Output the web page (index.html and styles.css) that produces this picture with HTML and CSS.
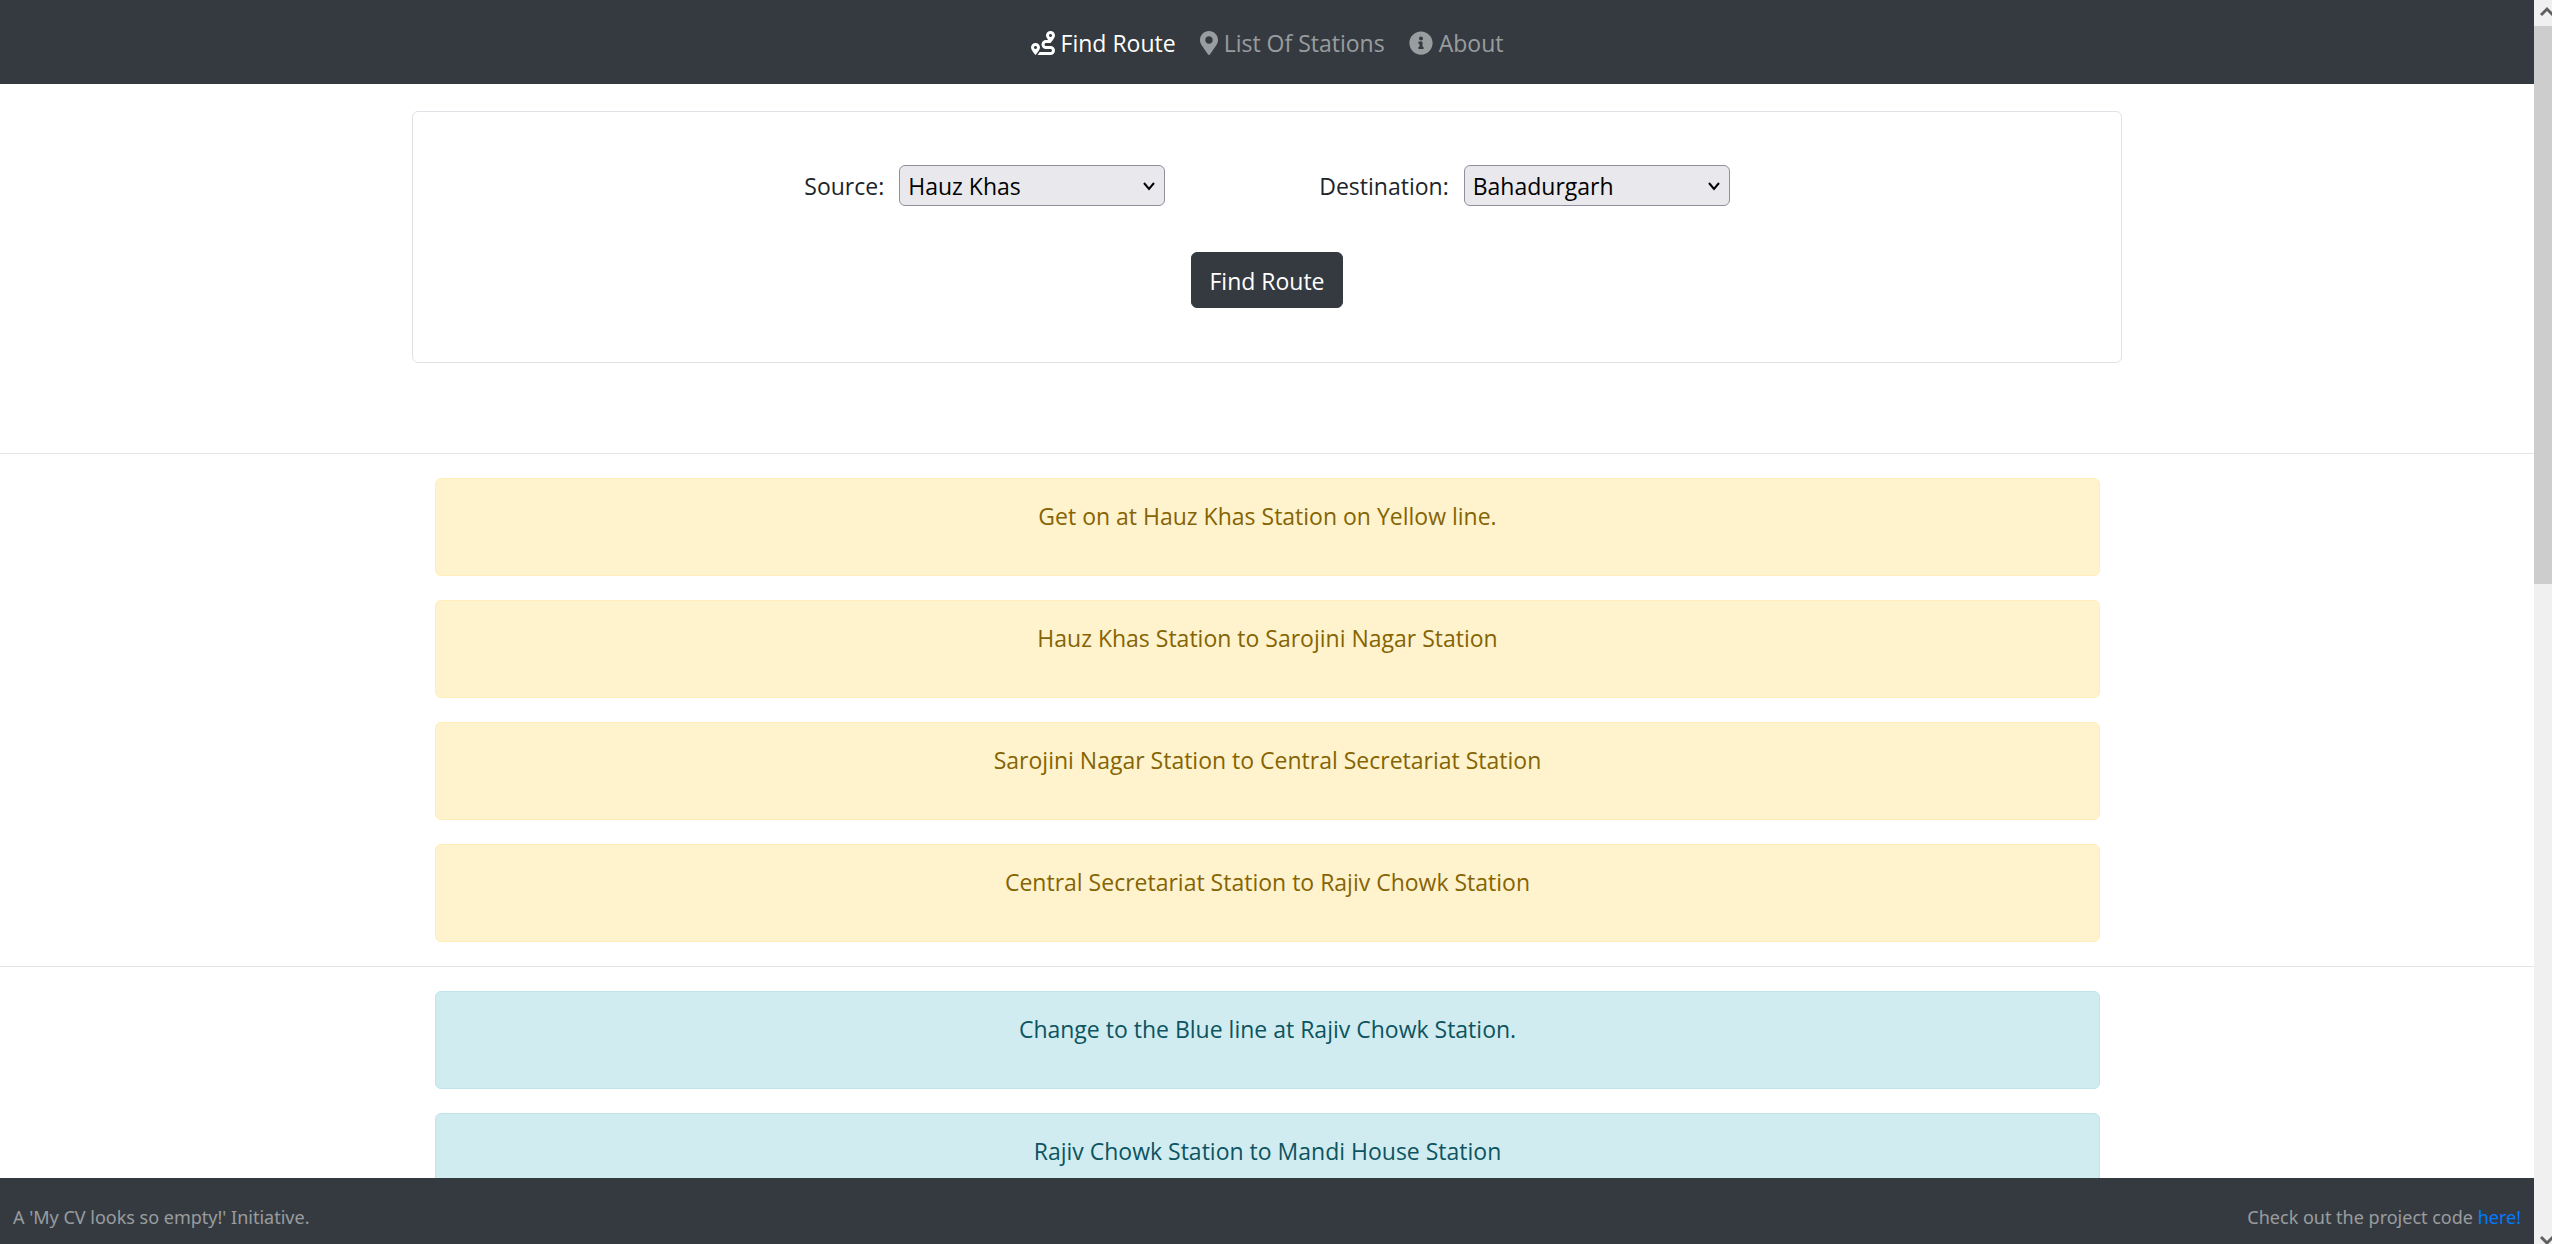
FILE: index.html
```html
<!DOCTYPE html>
<html lang="en">
<head>
<meta charset="utf-8">
<meta name="viewport" content="width=device-width, initial-scale=1">
<title>Find Route</title>
<link rel="stylesheet" href="styles.css">
</head>
<body>
<div class="page">
  <header class="navbar">
    <nav class="nav">
      <a class="nav-link active" href="#route">
        <svg class="icon" viewBox="0 0 512 512" aria-hidden="true"><path d="M416 320h-96c-17.6 0-32-14.4-32-32s14.4-32 32-32h96s96-107 96-160-43-96-96-96-96 43-96 96c0 25.5 22.2 63.4 45.3 96H320c-52.9 0-96 43.1-96 96s43.1 96 96 96h96c17.6 0 32 14.4 32 32s-14.4 32-32 32H185.5c-16 24.8-33.8 47.7-47.3 64H416c52.9 0 96-43.1 96-96s-43.1-96-96-96zm0-256c17.7 0 32 14.3 32 32s-14.3 32-32 32-32-14.3-32-32 14.3-32 32-32zM96 256c-53 0-96 43-96 96s96 160 96 160 96-107 96-160-43-96-96-96zm0 128c-17.7 0-32-14.3-32-32s14.3-32 32-32 32 14.3 32 32-14.3 32-32 32z"/></svg>
        <span>Find Route</span>
      </a>
      <a class="nav-link" href="#stations">
        <svg class="icon icon-narrow" viewBox="0 0 384 512" aria-hidden="true"><path d="M172.268 501.67C26.97 291.031 0 269.413 0 192 0 85.961 85.961 0 192 0s192 85.961 192 192c0 77.413-26.97 99.031-172.268 309.67-9.535 13.774-29.93 13.773-39.464 0zM192 272c44.183 0 80-35.817 80-80s-35.817-80-80-80-80 35.817-80 80 35.817 80 80 80z"/></svg>
        <span>List Of Stations</span>
      </a>
      <a class="nav-link" href="#about">
        <svg class="icon" viewBox="0 0 512 512" aria-hidden="true"><path d="M256 8C119.043 8 8 119.083 8 256c0 136.997 111.043 248 248 248s248-111.003 248-248C504 119.083 392.957 8 256 8zm0 110c23.196 0 42 18.804 42 42s-18.804 42-42 42-42-18.804-42-42 18.804-42 42-42zm56 254c0 6.627-5.373 12-12 12h-88c-6.627 0-12-5.373-12-12v-24c0-6.627 5.373-12 12-12h12v-64h-12c-6.627 0-12-5.373-12-12v-24c0-6.627 5.373-12 12-12h64c6.627 0 12 5.373 12 12v100h12c6.627 0 12 5.373 12 12v24z"/></svg>
        <span>About</span>
      </a>
    </nav>
  </header>

  <main class="content">
    <form class="route-form" id="route">
      <div class="fields">
        <div class="field">
          <label for="source">Source:</label>
          <div class="select-box">
            <select id="source"><option>Hauz Khas</option></select>
            <svg class="chevron" viewBox="0 0 14 10" aria-hidden="true"><path d="M2 2l5 6 5-6"/></svg>
          </div>
        </div>
        <div class="field">
          <label for="destination">Destination:</label>
          <div class="select-box">
            <select id="destination"><option>Bahadurgarh</option></select>
            <svg class="chevron" viewBox="0 0 14 10" aria-hidden="true"><path d="M2 2l5 6 5-6"/></svg>
          </div>
        </div>
      </div>
      <button class="btn" type="button">Find Route</button>
    </form>

    <hr class="divider">
    <section class="steps">
      <p class="step yellow">Get on at Hauz Khas Station on Yellow line.</p>
      <p class="step yellow">Hauz Khas Station to Sarojini Nagar Station</p>
      <p class="step yellow">Sarojini Nagar Station to Central Secretariat Station</p>
      <p class="step yellow">Central Secretariat Station to Rajiv Chowk Station</p>
    </section>
    <hr class="divider">
    <section class="steps">
      <p class="step blue">Change to the Blue line at Rajiv Chowk Station.</p>
      <p class="step blue">Rajiv Chowk Station to Mandi House Station</p>
    </section>
  </main>

  <footer class="footer">
    <span>A 'My CV looks so empty!' Initiative.</span>
    <span>Check out the project code <a href="#code">here!</a></span>
  </footer>
</div>
<div class="scrollbar" aria-hidden="true">
  <svg class="arrow" viewBox="0 0 18 26"><path d="M7 15l6-6 6 6"/></svg>
  <div class="track"><div class="thumb"></div></div>
  <svg class="arrow" viewBox="0 0 18 26"><path d="M7 19l6 6 6-6"/></svg>
</div>
</body>
</html>
```
FILE: styles.css
```css
* {
  box-sizing: border-box;
}

body {
  margin: 0;
  height: 100vh;
  display: flex;
  overflow: hidden;
  background: #fff;
  color: #212529;
  font-family: "Open Sans", "Noto Sans", sans-serif;
  font-size: 23px;
  line-height: 36px;
}

.page {
  flex: 1;
  min-width: 0;
  display: flex;
  flex-direction: column;
}

.navbar {
  flex: none;
  padding: 25px 24px 23px;
  background: #343a40;
}

.nav {
  display: flex;
  justify-content: center;
  gap: 24px;
}

.nav-link {
  display: flex;
  align-items: center;
  gap: 6px;
  color: rgba(255, 255, 255, 0.5);
  text-decoration: none;
}

.nav-link.active {
  color: #fff;
}

.icon {
  width: 24px;
  height: 24px;
  fill: currentColor;
}

.icon-narrow {
  width: 18px;
}

.content {
  flex: 1;
  min-height: 0;
  overflow: hidden;
}

.route-form {
  max-width: 1710px;
  margin: 27px auto 90px;
  padding: 53px 24px 54px;
  border: 1px solid #dee2e6;
  border-radius: 6px;
  display: flex;
  flex-direction: column;
  align-items: center;
  gap: 46px;
}

.fields {
  display: flex;
  flex-wrap: wrap;
  justify-content: center;
  gap: 24px 154px;
}

.field {
  display: flex;
  align-items: center;
  gap: 15px;
}

.select-box {
  display: grid;
  align-items: center;
}

.select-box > * {
  grid-area: 1 / 1;
}

select {
  appearance: none;
  width: 266px;
  height: 41px;
  padding: 0 36px 0 8px;
  border: 1px solid #8f8f9d;
  border-radius: 6px;
  background: #e9e9ed;
  color: #000;
  font: inherit;
}

.chevron {
  justify-self: end;
  width: 14px;
  height: 10px;
  margin-right: 9px;
  fill: none;
  stroke: #000;
  stroke-width: 2;
  pointer-events: none;
}

.btn {
  padding: 10px 17px 8px;
  border: 1px solid #343a40;
  border-radius: 6px;
  background: #343a40;
  color: #fff;
  font: inherit;
}

.divider {
  margin: 24px 0;
  border: 0;
  border-top: 1px solid rgba(0, 0, 0, 0.1);
}

.steps {
  max-width: 1710px;
  margin: 0 auto;
  padding: 0 22px 0 23px;
  display: flex;
  flex-direction: column;
  gap: 24px;
}

.step {
  margin: 0;
  padding: 19px 30px 41px;
  border: 1px solid;
  border-radius: 6px;
  text-align: center;
}

.yellow {
  color: #856404;
  background: #fff3cd;
  border-color: #ffeeba;
}

.blue {
  color: #0c5460;
  background: #d1ecf1;
  border-color: #bee5eb;
}

.footer {
  flex: none;
  display: flex;
  justify-content: space-between;
  padding: 24px 13px 12px;
  background: #343a40;
  color: rgba(255, 255, 255, 0.5);
  font-family: "Noto Sans", "Open Sans", sans-serif;
  font-size: 18px;
  line-height: 30px;
}

.footer a {
  color: #007bff;
  text-decoration: none;
}

.scrollbar {
  flex: none;
  width: 18px;
  display: flex;
  flex-direction: column;
  background: #f0f0f0;
}

.arrow {
  width: 18px;
  height: 26px;
  fill: none;
  stroke: #606060;
  stroke-width: 3;
}

.track {
  flex: 1;
}

.thumb {
  height: 46.8%;
  background: #cdcdcd;
}
```
